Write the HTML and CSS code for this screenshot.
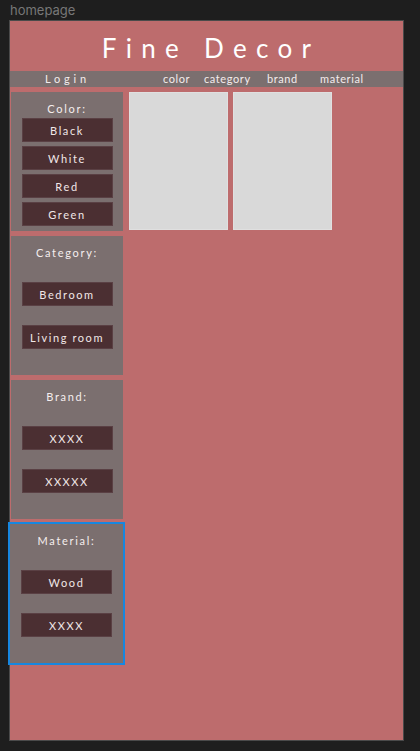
FILE: index.html
```html
<!DOCTYPE html>
<html lang="en">
<head>
    <meta charset="UTF-8">
    <meta name="viewport" content="width=device-width, initial-scale=1.0">
    <title>homepage</title>
    <link rel="stylesheet" href="styles.css">
</head>
<body>
    <div class="frame-label">homepage</div>
    <div class="frame">
        <header class="header">
            <h1>Fine Decor</h1>
        </header>
        <nav class="nav">
            <a class="login">Login</a>
            <div class="links">
                <a class="link-color">color</a>
                <a class="link-category">category</a>
                <a class="link-brand">brand</a>
                <a>material</a>
            </div>
        </nav>

        <div class="main">
            <aside class="sidebar">
                <div class="panel panel-color">
                    <p class="panel-title">Color:</p>
                    <div class="options">
                        <button>Black</button>
                        <button>White</button>
                        <button>Red</button>
                        <button>Green</button>
                    </div>
                </div>
                <div class="panel">
                    <p class="panel-title">Category:</p>
                    <div class="options">
                        <button>Bedroom</button>
                        <button>Living room</button>
                    </div>
                </div>
                <div class="panel">
                    <p class="panel-title">Brand:</p>
                    <div class="options">
                        <button>XXXX</button>
                        <button>XXXXX</button>
                    </div>
                </div>
                <div class="panel selected">
                    <p class="panel-title">Material:</p>
                    <div class="options">
                        <button>Wood</button>
                        <button>XXXX</button>
                    </div>
                </div>
            </aside>

            <section class="products">
                <div class="card"></div>
                <div class="card"></div>
            </section>
        </div>
    </div>
</body>
</html>
```

FILE: styles.css
```css
body {
    margin: 0;
    padding: 0 0 0 9px;
    background-color: #1e1e1e;
    font-family: Lato, "Open Sans", sans-serif;
}

.frame-label {
    height: 20px;
    padding-left: 1px;
    font-family: Inter, sans-serif;
    font-size: 13px;
    line-height: 20px;
    color: #777;
}

.frame {
    width: 393px;
    height: 719px;
    border: 1px solid #4a4a4a;
    background-color: #bd6c6d;
}

.header {
    height: 50px;
}

h1 {
    margin: 0;
    font-size: 26px;
    font-weight: 400;
    line-height: 55px;
    letter-spacing: 9.3px;
    text-indent: 9px;
    text-align: center;
    color: #ffffff;
}

.nav {
    display: flex;
    height: 16px;
    background-color: #7b6f6f;
    font-size: 11px;
    line-height: 16px;
    color: #f3ecec;
}

.nav a {
    cursor: pointer;
}

.login {
    width: 118px;
    margin-left: 35px;
    letter-spacing: 3.8px;
}

.links {
    display: flex;
    letter-spacing: 0.6px;
}

.link-color {
    width: 41px;
}

.link-category {
    width: 63px;
}

.link-brand {
    width: 53px;
}

.main {
    display: flex;
    gap: 6px;
    padding: 5px 0 0 1px;
}

.sidebar {
    display: flex;
    flex-direction: column;
    gap: 5px;
    width: 112px;
}

.panel {
    display: flex;
    flex-direction: column;
    align-items: center;
    height: 139px;
    padding-top: 11px;
    box-sizing: border-box;
    background-color: #7b6f6f;
}

.panel.selected {
    margin-left: -1px;
    outline: 2px solid #1787e0;
}

.panel-title {
    margin: 0 0 23px;
    font-size: 11px;
    line-height: 12px;
    letter-spacing: 1.7px;
    color: #f5eeee;
}

.options {
    display: flex;
    flex-direction: column;
    gap: 19px;
}

.panel-color .panel-title {
    margin-bottom: 3px;
}

.panel-color .options {
    gap: 4px;
}

button {
    width: 91px;
    height: 24px;
    padding: 0;
    border: 1px solid #5a4044;
    background-color: #4b2f32;
    font-family: Lato, "Open Sans", sans-serif;
    font-size: 11px;
    letter-spacing: 1.6px;
    color: #f1e7e7;
    cursor: pointer;
}

.products {
    display: flex;
    gap: 5px;
}

.card {
    width: 99px;
    height: 138px;
    box-sizing: border-box;
    border: 1px solid #e0e0e0;
    background-color: #d9d9d9;
}
```
